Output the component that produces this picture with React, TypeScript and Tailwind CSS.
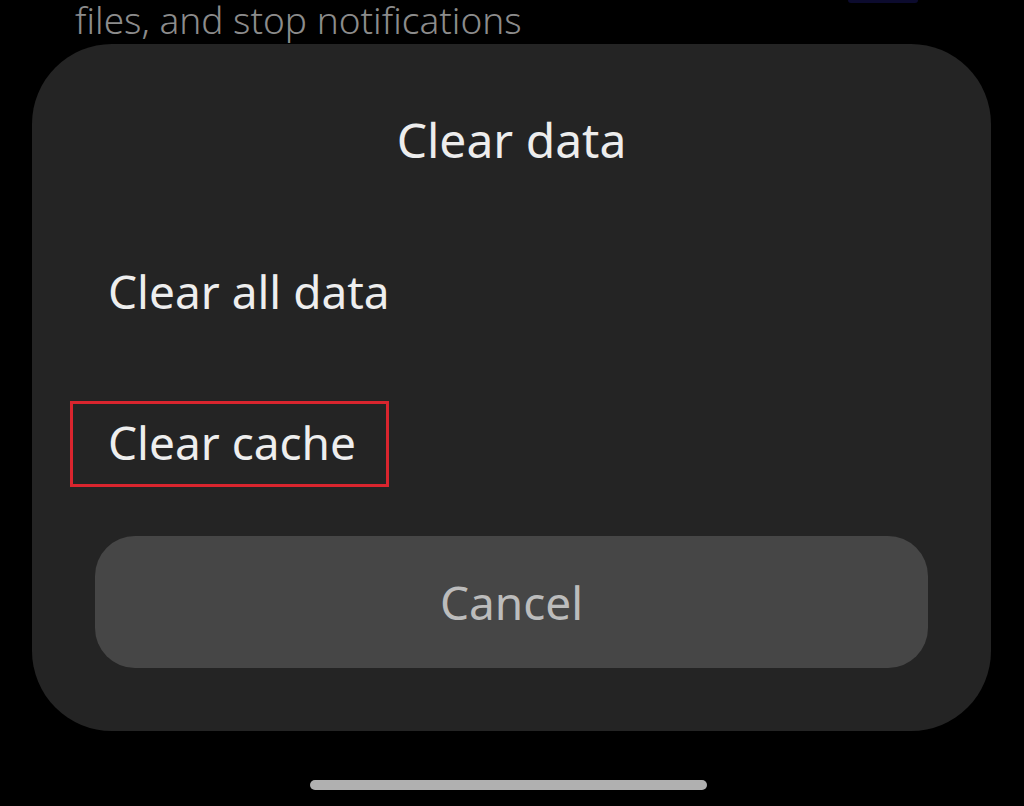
export default function App() {
  return (
    <div
      className="relative w-[1024px] h-[806px] bg-black overflow-hidden flex flex-col"
      style={{ fontFamily: '"Noto Sans", "Open Sans", sans-serif' }}
    >
      <div className="absolute top-0 left-[848px] w-[70px] h-[3px] rounded-b bg-[#0c0b2e]" />
      <div className="h-[44px] pl-[75px] text-[37px] leading-[40px] font-light text-[#8c8c8c] whitespace-nowrap">
        files, and stop notifications
      </div>

      <div className="ml-[32px] w-[959px] h-[687px] rounded-[80px] bg-[#242424] flex flex-col">
        <h2 className="pt-[72px] text-center text-[48px] leading-[48px] text-[#ededed]">
          Clear data
        </h2>
        <div className="mt-[104px] pl-[76px] text-[46px] leading-[46px] text-[#eeeeee]">
          Clear all data
        </div>
        <div className="mt-[87px] ml-[38px] w-[319px] h-[86px] border-[3px] border-[#d9252e] flex items-center pl-[35px] text-[46px] leading-[46px] text-[#eeeeee]">
          <span className="-mt-[4px]">Clear cache</span>
        </div>
        <button className="mt-[49px] mx-[63px] h-[132px] rounded-[40px] bg-[#464646] flex items-center justify-center text-[46px] leading-[46px] text-[#bcbcbc]">
          Cancel
        </button>
      </div>

      <div className="mt-[49px] ml-[310px] w-[397px] h-[10px] rounded-full bg-[#b0b0b0]" />
    </div>
  );
}
